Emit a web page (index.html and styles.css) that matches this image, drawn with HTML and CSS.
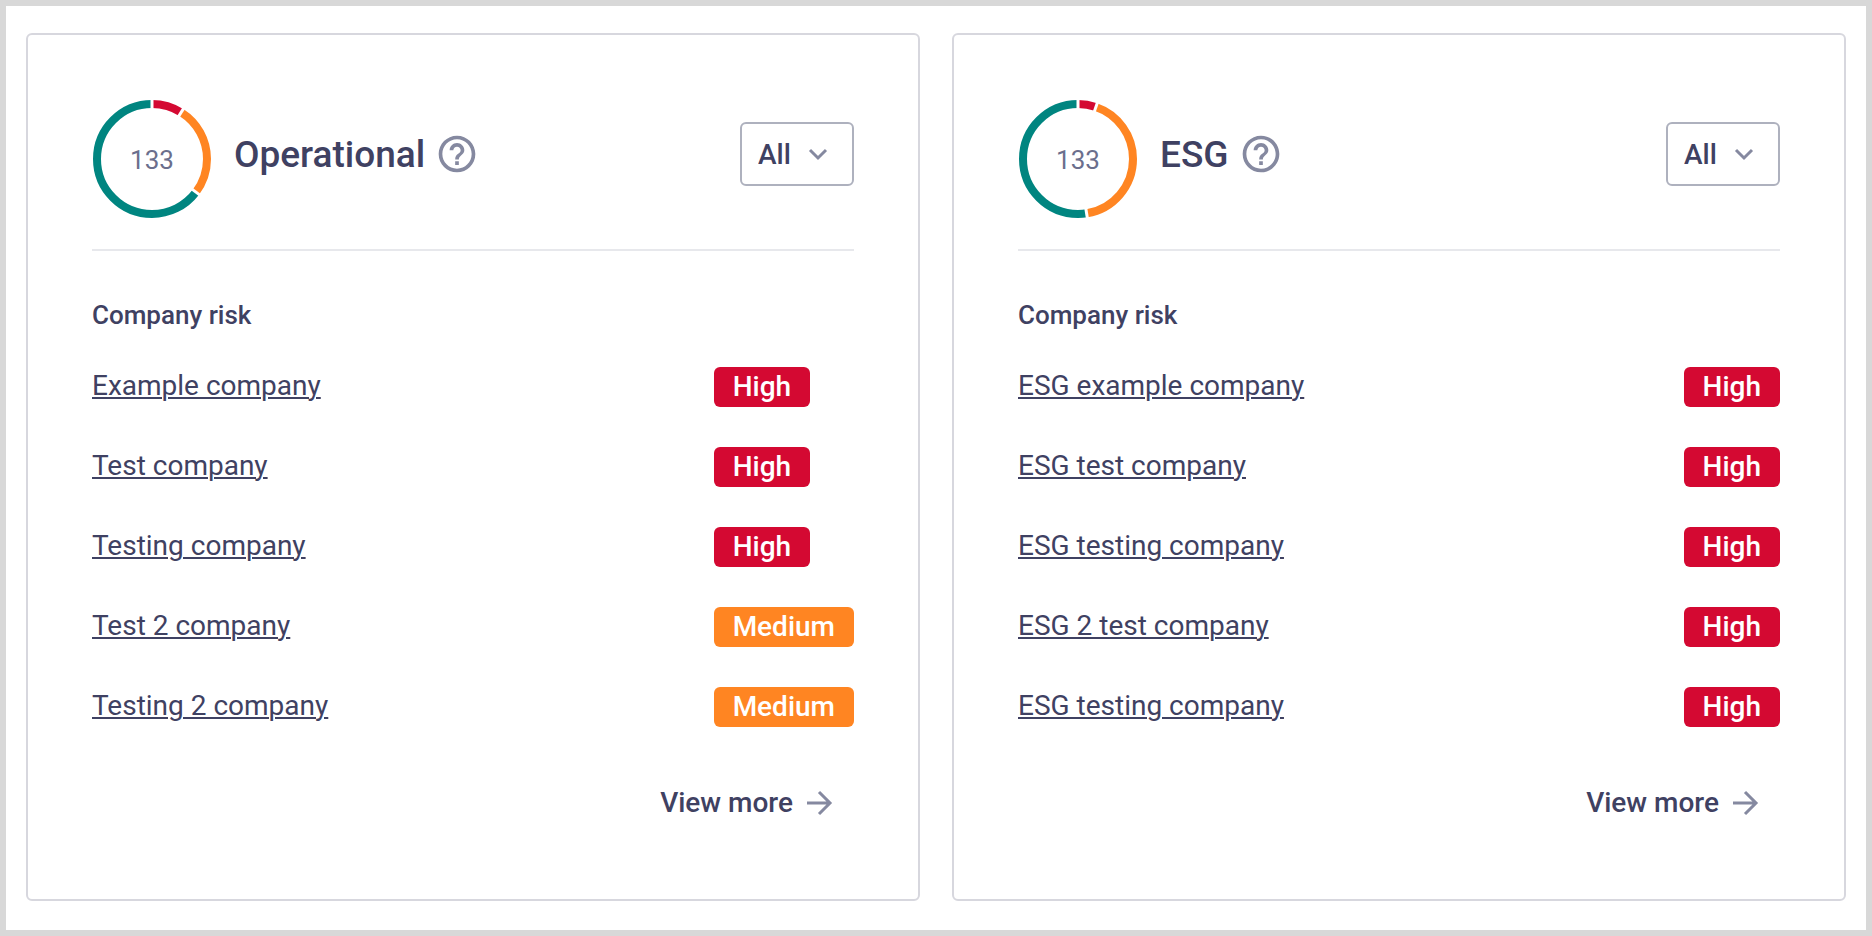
FILE: index.html
```html
<!DOCTYPE html>
<html lang="en">
<head>
<meta charset="UTF-8" />
<meta name="viewport" content="width=device-width, initial-scale=1.0"/>
<title>Company risk</title>
<link rel="stylesheet" href="styles.css">
</head>
<body>
<main class="dashboard">

<section class="card">
  <header class="card-header">
    <svg class="ring" viewBox="0 0 120 120" role="img" aria-label="133 companies">
      <g transform="rotate(-90 60 60)">
        <circle class="seg high" cx="60" cy="60" r="55" pathLength="133" stroke-dasharray="12 121" />
        <circle class="seg medium" cx="60" cy="60" r="55" pathLength="133" stroke-dasharray="35 98" stroke-dashoffset="-12" />
        <circle class="seg low" cx="60" cy="60" r="55" pathLength="133" stroke-dasharray="86 47" stroke-dashoffset="-47" />
      </g>
      <path class="split" d="M60 0v12" />
      <path class="split" d="M60 0v12" transform="rotate(32 60 60)" />
      <path class="split" d="M60 0v12" transform="rotate(127 60 60)" />
      <text class="ring-total" x="60" y="70">133</text>
    </svg>
    <div class="heading">
      <h2>Operational</h2>
      <button type="button" class="help" aria-label="Help">
        <svg viewBox="0 0 24 24"><path d="M11 18h2v-2h-2v2zm1-16C6.48 2 2 6.48 2 12s4.48 10 10 10 10-4.48 10-10S17.52 2 12 2zm0 18c-4.41 0-8-3.59-8-8s3.59-8 8-8 8 3.59 8 8-3.59 8-8 8zm0-14c-2.21 0-4 1.79-4 4h2c0-1.1.9-2 2-2s2 .9 2 2c0 2-3 1.75-3 5h2c0-2.25 3-2.5 3-5 0-2.21-1.79-4-4-4z"/></svg>
      </button>
      <div class="filter">
        <select aria-label="Filter operational risk">
          <option>All</option>
        </select>
        <svg viewBox="0 0 32 32"><path d="M8 12l8 8 8-8"/></svg>
      </div>
    </div>
  </header>

  <table class="risks">
    <thead>
      <tr><th colspan="2">Company risk</th></tr>
    </thead>
    <tbody>
      <tr><td><a href="#">Example company</a></td><td><span class="tag tag-high">High</span></td></tr>
      <tr><td><a href="#">Test company</a></td><td><span class="tag tag-high">High</span></td></tr>
      <tr><td><a href="#">Testing company</a></td><td><span class="tag tag-high">High</span></td></tr>
      <tr><td><a href="#">Test 2 company</a></td><td><span class="tag tag-medium">Medium</span></td></tr>
      <tr><td><a href="#">Testing 2 company</a></td><td><span class="tag tag-medium">Medium</span></td></tr>
    </tbody>
  </table>

  <a class="view-more" href="#">View more
    <svg viewBox="0 0 32 32"><path d="M4 16h23M16 5l11 11-11 11"/></svg>
  </a>
</section>

<section class="card">
  <header class="card-header">
    <svg class="ring" viewBox="0 0 120 120" role="img" aria-label="133 companies">
      <g transform="rotate(-90 60 60)">
        <circle class="seg high" cx="60" cy="60" r="55" pathLength="133" stroke-dasharray="7 126" />
        <circle class="seg medium" cx="60" cy="60" r="55" pathLength="133" stroke-dasharray="56 77" stroke-dashoffset="-7" />
        <circle class="seg low" cx="60" cy="60" r="55" pathLength="133" stroke-dasharray="70 63" stroke-dashoffset="-63" />
      </g>
      <path class="split" d="M60 0v12" />
      <path class="split" d="M60 0v12" transform="rotate(19 60 60)" />
      <path class="split" d="M60 0v12" transform="rotate(171 60 60)" />
      <text class="ring-total" x="60" y="70">133</text>
    </svg>
    <div class="heading">
      <h2>ESG</h2>
      <button type="button" class="help" aria-label="Help">
        <svg viewBox="0 0 24 24"><path d="M11 18h2v-2h-2v2zm1-16C6.48 2 2 6.48 2 12s4.48 10 10 10 10-4.48 10-10S17.52 2 12 2zm0 18c-4.41 0-8-3.59-8-8s3.59-8 8-8 8 3.59 8 8-3.59 8-8 8zm0-14c-2.21 0-4 1.79-4 4h2c0-1.1.9-2 2-2s2 .9 2 2c0 2-3 1.75-3 5h2c0-2.25 3-2.5 3-5 0-2.21-1.79-4-4-4z"/></svg>
      </button>
      <div class="filter">
        <select aria-label="Filter ESG risk">
          <option>All</option>
        </select>
        <svg viewBox="0 0 32 32"><path d="M8 12l8 8 8-8"/></svg>
      </div>
    </div>
  </header>

  <table class="risks">
    <thead>
      <tr><th colspan="2">Company risk</th></tr>
    </thead>
    <tbody>
      <tr><td><a href="#">ESG example company</a></td><td><span class="tag tag-high">High</span></td></tr>
      <tr><td><a href="#">ESG test company</a></td><td><span class="tag tag-high">High</span></td></tr>
      <tr><td><a href="#">ESG testing company</a></td><td><span class="tag tag-high">High</span></td></tr>
      <tr><td><a href="#">ESG 2 test company</a></td><td><span class="tag tag-high">High</span></td></tr>
      <tr><td><a href="#">ESG testing company</a></td><td><span class="tag tag-high">High</span></td></tr>
    </tbody>
  </table>

  <a class="view-more" href="#">View more
    <svg viewBox="0 0 32 32"><path d="M4 16h23M16 5l11 11-11 11"/></svg>
  </a>
</section>

</main>
</body>
</html>
```

FILE: styles.css
```css
* { margin: 0; padding: 0; box-sizing: border-box; }
body {
  min-height: 100vh;
  border: 6px solid #d8d8d8;
  background: #fff;
  color: #3f4162;
  font-family: Roboto, "Liberation Sans", sans-serif;
  font-size: 28px;
  line-height: 40px;
}
.dashboard {
  display: grid;
  grid-template-columns: 1fr 1fr;
  gap: 32px;
  padding: 27px 20px;
}
.card {
  display: flex;
  flex-direction: column;
  padding: 64px;
  border: 2px solid #d7d7de;
  border-radius: 6px;
}

/* header */
.card-header {
  display: flex;
  align-items: flex-start;
  gap: 22px;
  padding-bottom: 30px;
  border-bottom: 2px solid #e7e8ec;
}
.ring { width: 120px; height: 120px; flex: none; }
.seg { fill: none; stroke-width: 8; }
.high { stroke: #d40932; }
.medium { stroke: #ff8522; }
.low { stroke: #008580; }
.split { stroke: #fff; stroke-width: 3; }
.ring-total { fill: #6b6f8d; font-size: 26px; text-anchor: middle; }
.heading {
  flex: 1;
  display: flex;
  align-items: center;
  gap: 10px;
  height: 110px;
}
h2 { padding-top: 2px; font-size: 37px; font-weight: 500; }
.help {
  width: 44px; height: 44px;
  border: none; background: none;
  cursor: pointer;
}
.help svg { display: block; fill: #8589a0; }

.filter { position: relative; margin-left: auto; }
.filter select {
  appearance: none;
  height: 64px;
  padding: 2px 61px 0 16px;
  border: 2px solid #aeb1be;
  border-radius: 6px;
  background: #fff;
  color: inherit;
  font: inherit;
  font-weight: 500;
  display: block;
}
.filter svg {
  position: absolute;
  right: 20px; top: 16px;
  width: 32px; height: 32px;
  pointer-events: none;
}
.filter svg, .view-more svg { fill: none; stroke: #8589a0; stroke-width: 3; }

/* company list */
.risks { width: 100%; border-collapse: collapse; }
.risks th {
  padding: 48px 0 16px;
  text-align: left;
  font-size: 26px;
  font-weight: 500;
  line-height: 32px;
}
.risks td { height: 80px; vertical-align: middle; }
.risks td:first-child { padding-bottom: 2px; }
.risks td:last-child { width: 1px; }
.risks a {
  color: inherit;
  text-decoration-thickness: 2px;
  text-underline-offset: 2px;
}
.tag {
  display: block;
  width: max-content;
  padding: 0 19px;
  border-radius: 6px;
  color: #fff;
  font-weight: 500;
}
.tag-high { background: #d40932; }
.tag-medium { background: #ff8522; }

.view-more {
  display: flex;
  align-items: center;
  align-self: flex-end;
  gap: 10px;
  height: 64px;
  margin-top: 24px;
  padding: 0 19px;
  color: inherit;
  font-weight: 500;
  text-decoration: none;
}
.view-more svg { width: 32px; height: 32px; }
```
